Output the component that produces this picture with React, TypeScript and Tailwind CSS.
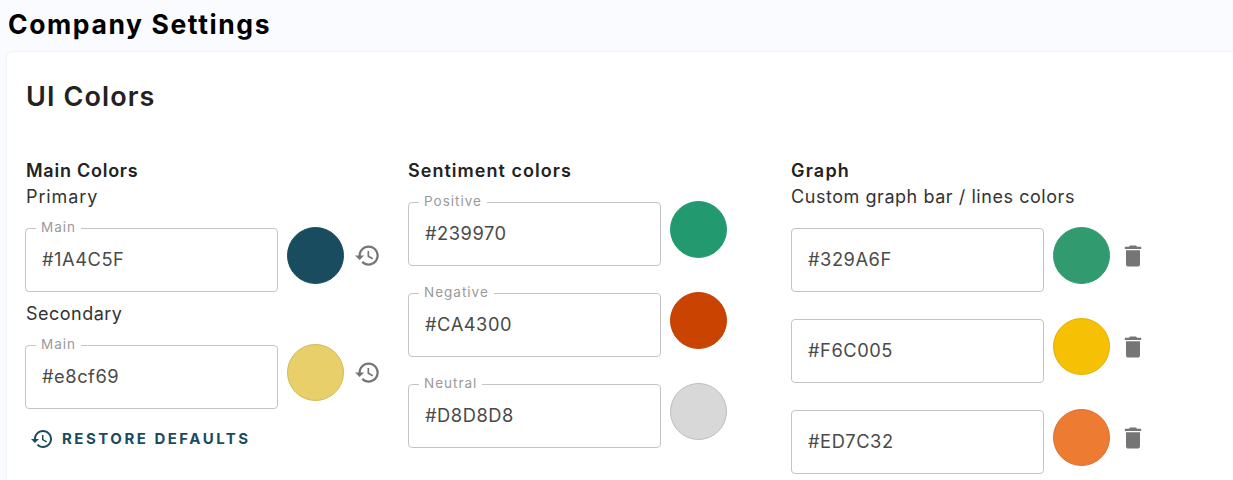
const FONT = "font-['Inter','Liberation_Sans',sans-serif]";

function HistoryIcon({ className }: { className: string }) {
  return (
    <svg viewBox="0 0 24 24" className={className} fill="currentColor">
      <path d="M13 3c-4.97 0-9 4.03-9 9H1l3.89 3.89.07.14L9 12H6c0-3.87 3.13-7 7-7s7 3.13 7 7-3.13 7-7 7c-1.93 0-3.68-.79-4.94-2.06l-1.42 1.42C8.27 19.99 10.51 21 13 21c4.97 0 9-4.03 9-9s-4.03-9-9-9zm-1 5v5l4.28 2.54.72-1.21-3.5-2.08V8H12z" />
    </svg>
  );
}

function DeleteIcon() {
  return (
    <svg viewBox="0 0 24 24" className="h-7 w-7 text-[#757575]" fill="currentColor">
      <path d="M6 19c0 1.1.9 2 2 2h8c1.1 0 2-.9 2-2V7H6v12zM19 4h-3.5l-1-1h-5l-1 1H5v2h14V4z" />
    </svg>
  );
}

function ColorField({
  label,
  value,
  swatch,
  action,
}: {
  label?: string;
  value: string;
  swatch: string;
  action?: "history" | "delete";
}) {
  return (
    <div className="flex items-start">
      <div className="relative flex h-[64px] w-[253px] items-center rounded border border-[#c4c4c4] bg-white pl-[16px]">
        {label && (
          <span className="absolute -top-[10px] left-[10px] bg-white px-[5px] text-[13.5px] leading-[16px] tracking-[1px] text-[#9a9a9a]">
            {label}
          </span>
        )}
        <span className="text-[18.3px] tracking-[0.53px] text-[#4a4a4a]">{value}</span>
      </div>
      <div className={`-mt-px ml-[9px] h-[57px] w-[57px] rounded-full border ${swatch}`} />
      {action === "history" && (
        <button className="ml-[10px] mt-[14px] text-[#757575]">
          <HistoryIcon className="h-[27px] w-[27px]" />
        </button>
      )}
      {action === "delete" && (
        <button className="ml-[9px] mt-[14px]">
          <DeleteIcon />
        </button>
      )}
    </div>
  );
}

export default function App() {
  return (
    <div className={`${FONT} h-[480px] overflow-hidden bg-[#fafbfe] text-[#222222]`}>
      <h1 className="pl-[8px] pt-[7px] text-[26.5px] font-bold leading-[34px] tracking-[1.6px] text-black">
        Company Settings
      </h1>
      <div className="ml-[7px] mt-[11px] h-[500px] rounded-l-md bg-white pl-[19px] pt-[27px] shadow-[0_0_3px_rgba(0,0,0,0.08)]">
        <h2 className="text-[27px] font-semibold leading-[36px] tracking-[1.1px]">UI Colors</h2>
        <div className="mt-[43px] grid grid-cols-[382px_383px_1fr]">
          <div>
            <h3 className="text-[18px] font-semibold leading-[26px] tracking-[0.75px]">Main Colors</h3>
            <p className="mb-[18px] text-[18px] leading-[26px] tracking-[0.9px] text-[#333333]">Primary</p>
            <div className="-ml-px">
              <ColorField label="Main" value="#1A4C5F" swatch="bg-[#1a4c5f] border-[#1a4c5f]" action="history" />
            </div>
            <p className="mb-[18px] mt-[9px] text-[18px] leading-[26px] tracking-[0.48px] text-[#333333]">Secondary</p>
            <div className="-ml-px">
              <ColorField label="Main" value="#e8cf69" swatch="bg-[#e8cf69] border-[#cfb95c]" action="history" />
            </div>
            <button className="ml-[4px] mt-[18px] flex items-center gap-[8px] text-[#1a4c5f]">
              <HistoryIcon className="h-6 w-6" />
              <span className="text-[15px] font-bold leading-[24px] tracking-[2.5px]">RESTORE DEFAULTS</span>
            </button>
          </div>
          <div>
            <h3 className="mb-[18px] text-[18px] font-semibold leading-[26px] tracking-[1.03px]">Sentiment colors</h3>
            <div className="flex flex-col gap-[27px]">
              <ColorField label="Positive" value="#239970" swatch="bg-[#239970] border-[#239970]" />
              <ColorField label="Negative" value="#CA4300" swatch="bg-[#ca4300] border-[#c04000]" />
              <ColorField label="Neutral" value="#D8D8D8" swatch="bg-[#d8d8d8] border-[#bdbdbd]" />
            </div>
          </div>
          <div>
            <h3 className="text-[18px] font-semibold leading-[26px] tracking-[1.2px]">Graph</h3>
            <p className="mb-[18px] text-[18px] leading-[26px] tracking-[0.55px] text-[#333333]">
              Custom graph bar / lines colors
            </p>
            <div className="flex flex-col gap-[27px]">
              <ColorField value="#329A6F" swatch="bg-[#329a6f] border-[#329a6f]" action="delete" />
              <ColorField value="#F6C005" swatch="bg-[#f6c005] border-[#e0ae05]" action="delete" />
              <ColorField value="#ED7C32" swatch="bg-[#ed7c32] border-[#d87030]" action="delete" />
            </div>
          </div>
        </div>
      </div>
    </div>
  );
}
